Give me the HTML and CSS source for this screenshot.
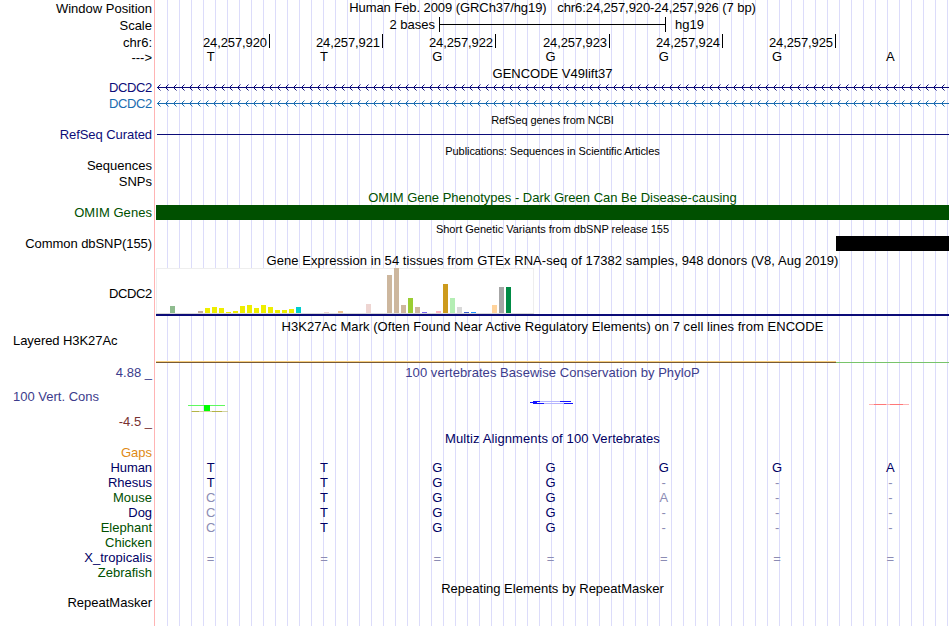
FILE: index.html
```html
<!DOCTYPE html>
<html lang="en">
<head>
    <meta charset="UTF-8">
    <meta name="viewport" content="width=device-width, initial-scale=1.0">
    <title>Human chr6:24,257,920-24,257,926 Genome Browser</title>
    <link rel="stylesheet" href="styles.css">
</head>
<body>

    <div class="browser">
        <!-- Position, scale and ruler -->
        <div class="row h16">
            <div class="label low">Window Position</div>
            <div class="track title up tight">Human Feb. 2009 (GRCh37/hg19) &nbsp; chr6:24,257,920-24,257,926 (7 bp)</div>
        </div>
        <div class="row h17">
            <div class="label low">Scale</div>
            <div class="track scale">
                <span class="scale-size">2 bases</span>
                <span class="scale-bar"></span>
                <span class="scale-db">hg19</span>
            </div>
        </div>
        <div class="row h17">
            <div class="label low">chr6:</div>
            <div class="track ruler">
                <span>24,257,920</span><span>24,257,921</span><span>24,257,922</span><span>24,257,923</span><span>24,257,924</span><span>24,257,925</span><span></span>
            </div>
        </div>
        <div class="row h16">
            <div class="label">---&gt;</div>
            <div class="track bases raised"><span>T</span><span>T</span><span>G</span><span>G</span><span>G</span><span>G</span><span>A</span></div>
        </div>

        <!-- GENCODE -->
        <div class="row h14"><div class="track title low">GENCODE V49lift37</div></div>
        <div class="row h15">
            <div class="label navy gene">DCDC2</div>
            <svg class="track" width="793" height="15">
                <defs>
                    <pattern id="arrows1" width="8" height="15" patternUnits="userSpaceOnUse">
                        <path d="M4.5 4.5L1.5 7.5L4.5 10.5" fill="none" stroke="#0c0c78"/>
                    </pattern>
                </defs>
                <rect width="793" height="15" fill="url(#arrows1)"/>
                <path d="M1 7.5H793" stroke="#0c0c78"/>
            </svg>
        </div>
        <div class="row h16">
            <div class="label blue gene low">DCDC2</div>
            <svg class="track" width="793" height="16">
                <defs>
                    <pattern id="arrows2" width="8" height="16" patternUnits="userSpaceOnUse">
                        <path d="M4.5 5.5L1.5 8.5L4.5 11.5" fill="none" stroke="#1a6cb0"/>
                    </pattern>
                </defs>
                <rect width="793" height="16" fill="url(#arrows2)"/>
                <path d="M1 8.5H793" stroke="#1a6cb0"/>
            </svg>
        </div>

        <!-- RefSeq -->
        <div class="row h16"><div class="track title small tight low">RefSeq genes from NCBI</div></div>
        <div class="row h15">
            <div class="label navy tight">RefSeq Curated</div>
            <svg class="track" width="793" height="15"><path d="M1 7.5H793" stroke="#0c0c78"/></svg>
        </div>

        <!-- Publications -->
        <div class="row h16"><div class="track title small tight low">Publications: Sequences in Scientific Articles</div></div>
        <div class="row h15"><div class="label">Sequences</div></div>
        <div class="row h16"><div class="label low">SNPs</div></div>

        <!-- OMIM -->
        <div class="row h16"><div class="track title green low">OMIM Gene Phenotypes - Dark Green Can Be Disease-causing</div></div>
        <div class="row h15">
            <div class="label green wide">OMIM Genes</div>
            <div class="track item-omim"></div>
        </div>

        <!-- dbSNP -->
        <div class="row h16"><div class="track title small low">Short Genetic Variants from dbSNP release 155</div></div>
        <div class="row h15">
            <div class="label tight">Common dbSNP(155)</div>
            <div class="track"><div class="item-snp"></div></div>
        </div>

        <!-- GTEx -->
        <div class="row h17"><div class="track title wide low">Gene Expression in 54 tissues from GTEx RNA-seq of 17382 samples, 948 donors (V8, Aug 2019)</div></div>
        <div class="row h50">
            <div class="label gene low">DCDC2</div>
            <svg class="track" width="793" height="50" shape-rendering="crispEdges">
                <rect x="0" y="0" width="378" height="46" fill="#eeeeee"/>
                <rect x="1" y="1" width="376" height="44" fill="#ffffff"/>
                <rect x="0" y="45" width="378" height="1" fill="#d8d8d8"/>
                <rect x="14" y="38" width="5" height="7" fill="#8fbc8f"/>
                <rect x="42" y="43" width="5" height="2" fill="#c6b09a"/>
                <g fill="#eeee00">
                    <rect x="49" y="40" width="5" height="5"/>
                    <rect x="56" y="39" width="5" height="6"/>
                    <rect x="63" y="40" width="5" height="5"/>
                    <rect x="70" y="44" width="5" height="1"/>
                    <rect x="77" y="43" width="5" height="2"/>
                    <rect x="84" y="38" width="5" height="7"/>
                    <rect x="91" y="37" width="5" height="8"/>
                    <rect x="98" y="40" width="5" height="5"/>
                    <rect x="105" y="37" width="5" height="8"/>
                    <rect x="112" y="39" width="5" height="6"/>
                    <rect x="119" y="42" width="5" height="3"/>
                    <rect x="126" y="42" width="5" height="3"/>
                    <rect x="133" y="41" width="5" height="4"/>
                </g>
                <rect x="140" y="39" width="5" height="6" fill="#00cdcd"/>
                <rect x="168" y="44" width="5" height="1" fill="#eed5d2"/>
                <rect x="182" y="43" width="5" height="2" fill="#eec591"/>
                <rect x="210" y="36" width="5" height="9" fill="#eed5d2"/>
                <rect x="231" y="7" width="5" height="38" fill="#cdb79e"/>
                <rect x="238" y="0" width="5" height="45" fill="#cdb79e"/>
                <rect x="245" y="37" width="5" height="8" fill="#cdb79e"/>
                <rect x="252" y="30" width="5" height="15" fill="#9acd32"/>
                <rect x="259" y="39" width="5" height="6" fill="#cdb79e"/>
                <rect x="266" y="44" width="5" height="1" fill="#7a67ee"/>
                <rect x="280" y="43" width="5" height="2" fill="#ffb6c1"/>
                <rect x="287" y="16" width="5" height="29" fill="#cd9b1d"/>
                <rect x="294" y="30" width="5" height="15" fill="#b4eeb4"/>
                <rect x="301" y="39" width="5" height="6" fill="#d9d9d9"/>
                <rect x="308" y="44" width="5" height="1" fill="#3a5fcd"/>
                <rect x="315" y="44" width="5" height="1" fill="#1e90ff"/>
                <rect x="336" y="37" width="5" height="8" fill="#ffd39b"/>
                <rect x="343" y="19" width="5" height="26" fill="#a6a6a6"/>
                <rect x="350" y="19" width="5" height="26" fill="#008b45"/>
                <rect x="0" y="46" width="793" height="2" fill="#0c0c78"/>
            </svg>
        </div>

        <!-- H3K27Ac -->
        <div class="row h16"><div class="track title wide low">H3K27Ac Mark (Often Found Near Active Regulatory Elements) on 7 cell lines from ENCODE</div></div>
        <div class="row h30">
            <div class="label left tight">Layered H3K27Ac</div>
            <svg class="track" width="793" height="30" shape-rendering="crispEdges">
                <rect x="0" y="27" width="680" height="1" fill="#f5cd7d"/>
                <rect x="0" y="28" width="680" height="1" fill="#7a5a32"/>
                <rect x="680" y="28" width="113" height="1" fill="#78c46a"/>
            </svg>
        </div>

        <!-- Conservation -->
        <div class="row h16">
            <div class="label indigo low">4.88 _</div>
            <div class="track title indigo wide low">100 vertebrates Basewise Conservation by PhyloP</div>
        </div>
        <div class="row h50">
            <div class="label cons">
                <span class="indigo">100 Vert. Cons</span>
                <span class="maroon">-4.5 _</span>
            </div>
            <svg class="track" width="793" height="50">
                <path d="M32 25.5H69" stroke="#60f860"/>
                <path d="M35 31.5H72" stroke="#d2d2a0"/>
                <path d="M36 31.5H43M56 31.5H66" stroke="#b4b446"/>
                <rect x="48" y="25" width="6" height="6" fill="#00ff00"/>
                <path d="M380 21.5H411M379 23.5H417" stroke="#b4b4ff"/>
                <path d="M374 22.5H381M377 21.5H384M377 23.5H388M404 21.5H415M408 23.5H417" stroke="#1414ff"/>
                <path d="M713 24.5H753" stroke="#ffb4b4"/>
                <path d="M718 24.5H730M734 24.5H747" stroke="#ff7878"/>
            </svg>
        </div>

        <!-- Multiz -->
        <div class="row h15"><div class="track title dark wider low">Multiz Alignments of 100 Vertebrates</div></div>
        <div class="row h15"><div class="label orange">Gaps</div></div>
        <div class="row h15">
            <div class="label dark tight">Human</div>
            <div class="track bases dark"><span>T</span><span>T</span><span>G</span><span>G</span><span>G</span><span>G</span><span>A</span></div>
        </div>
        <div class="row h15">
            <div class="label dark">Rhesus</div>
            <div class="track bases dark"><span>T</span><span>T</span><span>G</span><span>G</span><span class="diff">-</span><span class="diff">-</span><span class="diff">-</span></div>
        </div>
        <div class="row h15">
            <div class="label green">Mouse</div>
            <div class="track bases dark"><span class="diff">C</span><span>T</span><span>G</span><span>G</span><span class="diff">A</span><span class="diff">-</span><span class="diff">-</span></div>
        </div>
        <div class="row h15">
            <div class="label dark tight">Dog</div>
            <div class="track bases dark"><span class="diff">C</span><span>T</span><span>G</span><span>G</span><span class="diff">-</span><span class="diff">-</span><span class="diff">-</span></div>
        </div>
        <div class="row h15">
            <div class="label green">Elephant</div>
            <div class="track bases dark"><span class="diff">C</span><span>T</span><span>G</span><span>G</span><span class="diff">-</span><span class="diff">-</span><span class="diff">-</span></div>
        </div>
        <div class="row h15"><div class="label green">Chicken</div></div>
        <div class="row h15">
            <div class="label dark wide">X_tropicalis</div>
            <div class="track bases gap"><span>=</span><span>=</span><span>=</span><span>=</span><span>=</span><span>=</span><span>=</span></div>
        </div>
        <div class="row h15"><div class="label green">Zebrafish</div></div>

        <!-- RepeatMasker -->
        <div class="row h15"><div class="track title low">Repeating Elements by RepeatMasker</div></div>
        <div class="row h15"><div class="label">RepeatMasker</div></div>
    </div>

</body>
</html>
```
FILE: styles.css
```css
body {
    margin: 0;
    background: #fff;
    font-family: "Liberation Sans", Arial, sans-serif;
    font-size: 13px;
    color: #000;
}

/* vertical guide lines every 12px, pink line between labels and tracks */
.browser {
    width: 949px;
    height: 626px;
    overflow: hidden;
    background:
        linear-gradient(#ffb4b4, #ffb4b4) 154px 0 / 1px 100% no-repeat,
        repeating-linear-gradient(to right, transparent 0, transparent 11px, #dcdcfa 11px, #dcdcfa 12px) 156px 0 / 793px 100% no-repeat;
}

.row {
    display: flex;
    white-space: nowrap;
}

.h14 { height: 14px; line-height: 14px; }
.h15 { height: 15px; line-height: 15px; }
.h16 { height: 16px; line-height: 16px; }
.h17 { height: 17px; line-height: 17px; }
.h30 { height: 30px; line-height: 13px; }
.h50 { height: 50px; line-height: 50px; }

.label {
    flex: none;
    width: 152px;
    text-align: right;
}

.label.left {
    box-sizing: border-box;
    padding-left: 13px;
    text-align: left;
}

.track {
    display: block;
    flex: none;
    width: 793px;
    margin-left: auto;
}

.title {
    text-align: center;
}

.small {
    font-size: 11px;
}

.low {
    padding-top: 1px;
}

.up {
    line-height: 15px;
}

/* small tracking corrections */
.tight { letter-spacing: -0.07px; }
.wide { letter-spacing: 0.05px; }
.wider { letter-spacing: 0.11px; }
.gene { letter-spacing: -0.35px; }

.navy { color: #0c0c78; }
.blue { color: #1a6cb0; }
.green { color: #005000; }
.indigo { color: #3c3c8c; }
.maroon { color: #783232; }
.dark { color: #000064; }
.orange { color: #e08a14; }

.scale {
    display: flex;
}

.scale-size {
    width: 279px;
    margin-right: 4px;
    text-align: right;
}

.scale-bar {
    box-sizing: border-box;
    width: 227px;
    height: 15px;
    margin-top: 1px;
    border: solid #000;
    border-width: 0 1px;
    background: linear-gradient(#000, #000) 0 7px / 100% 1px no-repeat;
}

.scale-db {
    margin-left: 9px;
}

.ruler {
    display: grid;
    grid-template-columns: 114px 113px 113px 114px 113px 113px 113px;
    letter-spacing: -0.1px;
}

.ruler span {
    height: 14px;
    margin-top: 1px;
    padding-right: 2px;
    border-right: 1px solid #000;
    text-align: right;
}

.ruler span:last-child {
    border: 0;
}

.bases {
    display: grid;
    grid-template-columns: repeat(7, 1fr);
}

.bases span {
    padding-right: 4px;
    text-align: center;
}

.raised {
    line-height: 13px;
}

.diff, .gap {
    color: #8c8cb4;
}

.gap {
    line-height: 17px;
}

.item-omim {
    background: #005000;
}

.item-snp {
    width: 113px;
    height: 15px;
    margin-left: 680px;
    background: #000;
}

.cons {
    display: flex;
    flex-direction: column;
    justify-content: space-between;
    line-height: 16px;
}

.cons .indigo {
    padding: 9px 0 0 13px;
    text-align: left;
}
```
